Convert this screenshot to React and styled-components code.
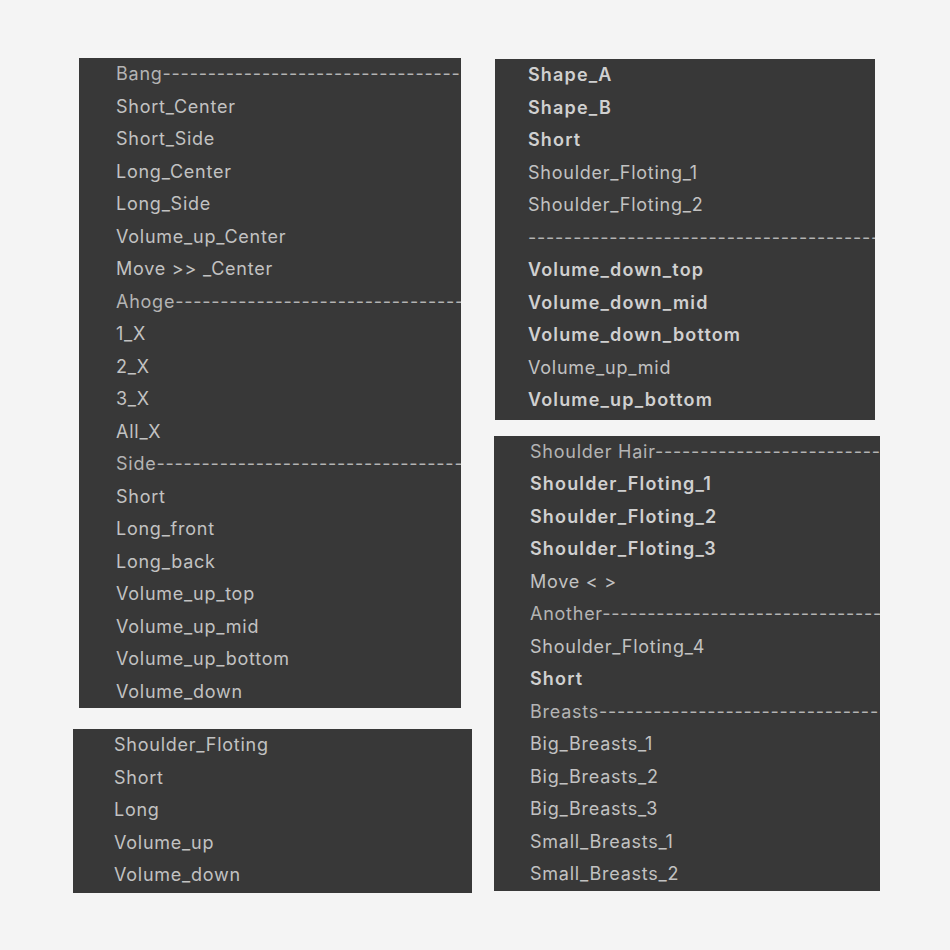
import React from "react";
import styled, { createGlobalStyle } from "styled-components";

const Global = createGlobalStyle`
  html, body { margin: 0; padding: 0; background: #f4f4f4; }
  body { font-family: Inter, "Noto Sans", sans-serif; }
`;

const Page = styled.div`
  width: 950px;
  height: 950px;
  box-sizing: border-box;
  display: grid;
  grid-template-columns: 400px 410px;
  column-gap: 21px;
  padding: 58px 0 0 73px;
`;

const Column = styled.div`
  display: flex;
  flex-direction: column;
  gap: ${(p) => p.$gap}px;
`;

const Panel = styled.div`
  background: #383838;
  width: ${(p) => p.$w}px;
  margin-left: ${(p) => p.$ml || 0}px;
  margin-top: ${(p) => p.$mt || 0}px;
  padding: 0 0 ${(p) => p.$pb || 0}px ${(p) => p.$pl}px;
  box-sizing: border-box;
  overflow: hidden;
  display: flex;
  flex-direction: column;
`;

const Row = styled.div`
  height: 32.5px;
  line-height: 32.5px;
  font-size: 18px;
  white-space: nowrap;
  letter-spacing: ${(p) => (p.$bold ? "1.15px" : "0.75px")};
  color: ${(p) => (p.$bold ? "#d0d0d0" : p.$head ? "#b4b4b4" : "#c2c2c2")};
  font-weight: ${(p) => (p.$bold ? 600 : 400)};
`;

const DASH = "-".repeat(64);

const panel1 = [
  ["Bang" + DASH, "h"],
  ["Short_Center"],
  ["Short_Side"],
  ["Long_Center"],
  ["Long_Side"],
  ["Volume_up_Center"],
  ["Move >> _Center"],
  ["Ahoge" + DASH, "h"],
  ["1_X"],
  ["2_X"],
  ["3_X"],
  ["All_X"],
  ["Side" + DASH, "h"],
  ["Short"],
  ["Long_front"],
  ["Long_back"],
  ["Volume_up_top"],
  ["Volume_up_mid"],
  ["Volume_up_bottom"],
  ["Volume_down"],
];

const panel2 = [["Shoulder_Floting"], ["Short"], ["Long"], ["Volume_up"], ["Volume_down"]];

const panel3 = [
  ["Shape_A", "b"],
  ["Shape_B", "b"],
  ["Short", "b"],
  ["Shoulder_Floting_1"],
  ["Shoulder_Floting_2"],
  [DASH, "h"],
  ["Volume_down_top", "b"],
  ["Volume_down_mid", "b"],
  ["Volume_down_bottom", "b"],
  ["Volume_up_mid"],
  ["Volume_up_bottom", "b"],
];

const panel4 = [
  ["Shoulder Hair" + DASH, "h"],
  ["Shoulder_Floting_1", "b"],
  ["Shoulder_Floting_2", "b"],
  ["Shoulder_Floting_3", "b"],
  ["Move < >"],
  ["Another" + DASH, "h"],
  ["Shoulder_Floting_4"],
  ["Short", "b"],
  ["Breasts" + DASH, "h"],
  ["Big_Breasts_1"],
  ["Big_Breasts_2"],
  ["Big_Breasts_3"],
  ["Small_Breasts_1"],
  ["Small_Breasts_2"],
];

const Rows = ({ items }) =>
  items.map(([t, k], i) => (
    <Row key={i} $bold={k === "b"} $head={k === "h"}>
      {t}
    </Row>
  ));

export default function App() {
  return (
    <>
      <Global />
      <Page>
        <Column $gap={21}>
          <Panel $w={382} $ml={6} $pl={37}>
            <Rows items={panel1} />
          </Panel>
          <Panel $w={399} $pl={41} $pb={1}>
            <Rows items={panel2} />
          </Panel>
        </Column>
        <Column $gap={16}>
          <Panel $w={380} $ml={1} $mt={1} $pl={33} $pb={3}>
            <Rows items={panel3} />
          </Panel>
          <Panel $w={386} $pl={36}>
            <Rows items={panel4} />
          </Panel>
        </Column>
      </Page>
    </>
  );
}
